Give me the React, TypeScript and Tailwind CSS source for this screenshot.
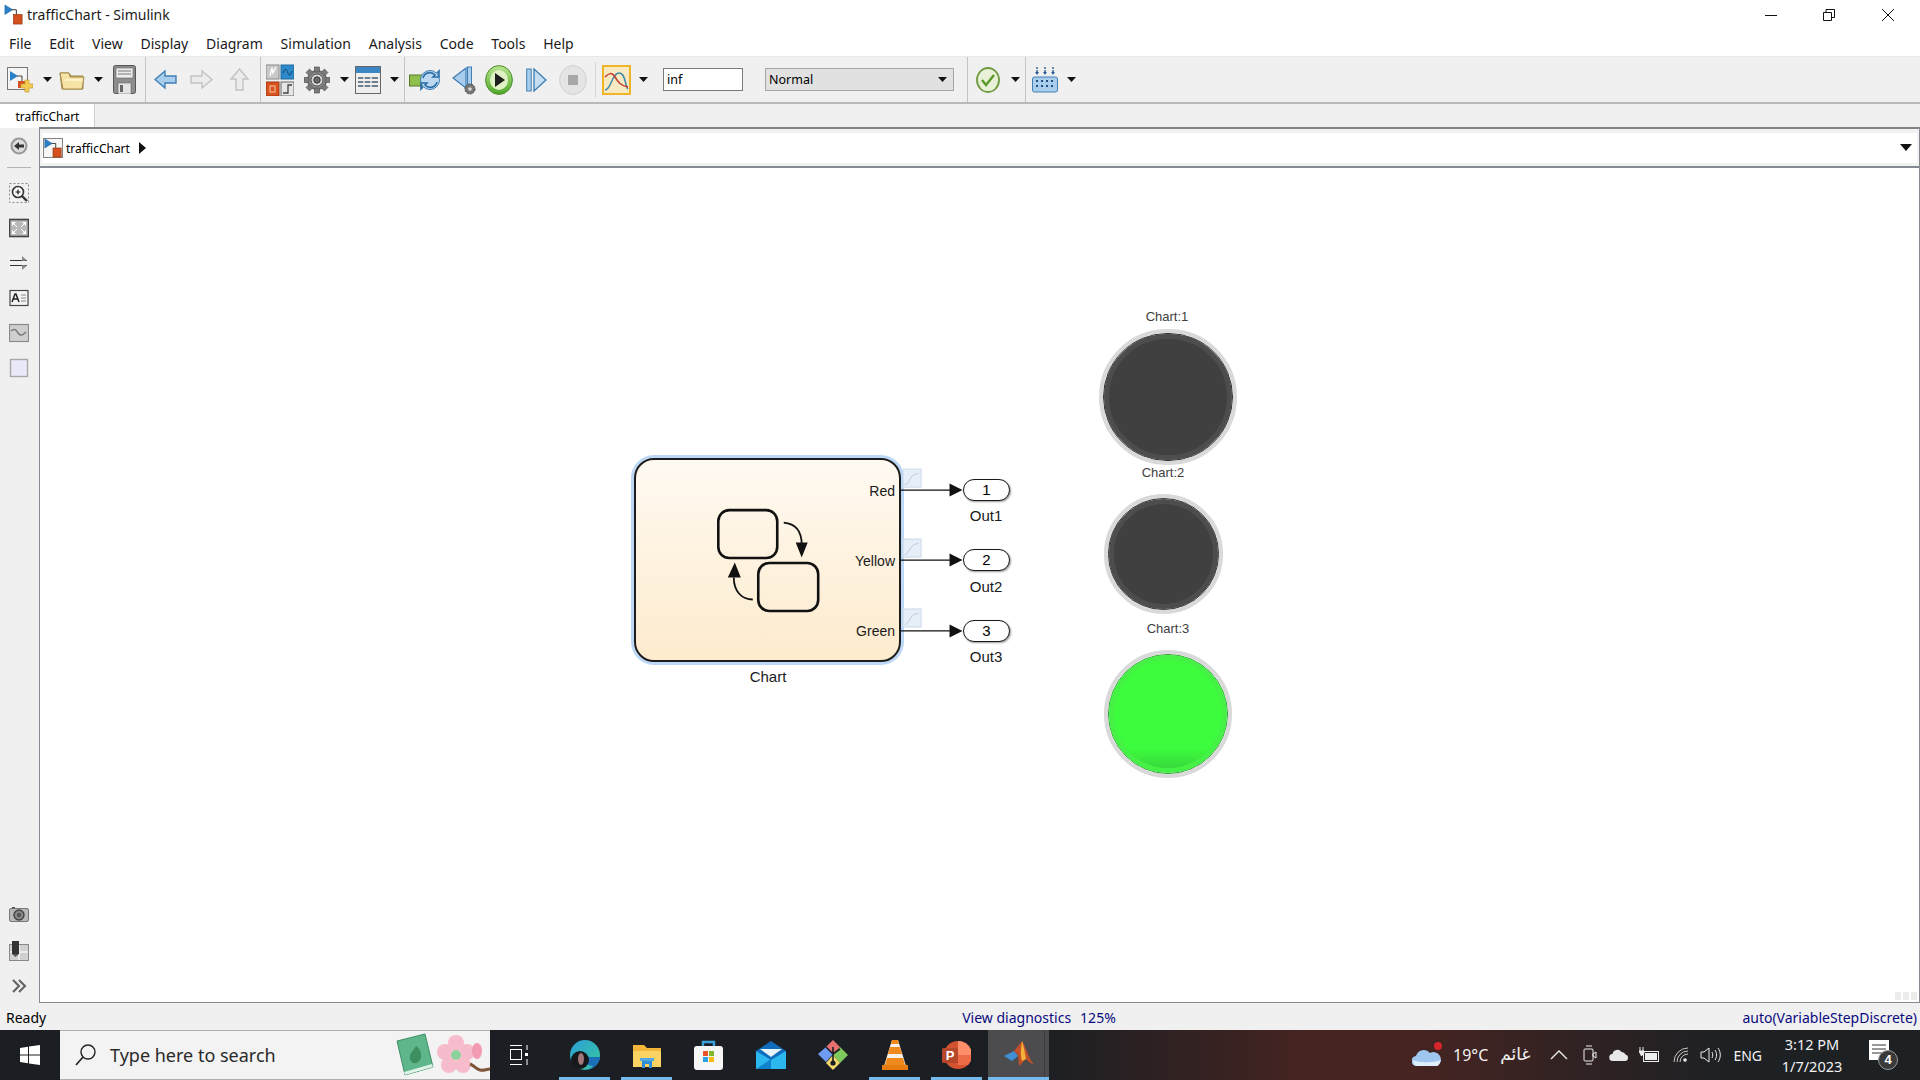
import type { ReactNode } from "react";

const ui = "font-['Noto_Sans','Open_Sans',sans-serif]";
const arial = "font-['Liberation_Sans',Arial,sans-serif]";

function Caret({ className = "" }: { className?: string }) {
  return (
    <svg width="9" height="5" viewBox="0 0 9 5" className={className}>
      <path d="M0 0h9L4.5 5z" fill="#111" />
    </svg>
  );
}

function ModelIcon({ size = 22, boxed = false }: { size?: number; boxed?: boolean }) {
  return (
    <svg width={size} height={size} viewBox="0 0 22 22">
      {boxed && <rect x="0.5" y="0.5" width="21" height="21" fill="#f6f6f6" stroke="#777" />}
      <path d="M9 6h5v7" fill="none" stroke="#333" />
      <path d="M2 1l8 5-8 5z" fill="#2a7fc9" stroke="#1b5f9b" strokeWidth=".6" />
      <rect x="11" y="11" width="9" height="10" fill="#d4501e" stroke="#8e3410" strokeWidth=".7" />
    </svg>
  );
}

function NewIcon() {
  return (
    <svg width="26" height="26" viewBox="0 0 26 26">
      <rect x="0.5" y="0.5" width="20" height="22" fill="#f4f4f4" stroke="#777" />
      <path d="M3 4l8 5-8 5z" fill="#2a7fc9" />
      <path d="M10 9h5v6" fill="none" stroke="#444" />
      <rect x="11" y="14" width="7" height="7" fill="#d4501e" />
      <path d="M18 13h4v4h4v4h-4v4h-4v-4h-4v-4h4z" fill="#f2cc54" stroke="#c89a2a" strokeWidth=".7" />
    </svg>
  );
}

function FolderIcon() {
  return (
    <svg width="26" height="20" viewBox="0 0 26 20">
      <path d="M1 3h9l2 3h12v13H3z" fill="#d7b767" stroke="#9a8448" />
      <path d="M1 3h9l1 4h14l-2 12H4z" fill="#f7e3a5" stroke="#a68d4f" />
      <path d="M6 9h17v2H6z" fill="#fff3c9" />
    </svg>
  );
}

function SaveIcon() {
  return (
    <svg width="23" height="29" viewBox="0 0 23 29">
      <rect x="0.5" y="0.5" width="22" height="28" rx="2" fill="#8d8d8d" stroke="#555" />
      <rect x="3" y="3" width="17" height="10" fill="#ececec" stroke="#666" strokeWidth=".6" />
      <path d="M5 6h13M5 9h13" stroke="#777" />
      <rect x="5" y="18" width="13" height="11" fill="#e4e4e4" stroke="#666" strokeWidth=".6" />
      <rect x="7" y="20" width="3" height="7" fill="#666" />
    </svg>
  );
}

function ArrowIcon({ dir, on }: { dir: "left" | "right" | "up"; on?: boolean }) {
  const rot = dir === "left" ? 0 : dir === "right" ? 180 : 90;
  return (
    <svg width="23" height="23" viewBox="0 0 23 23">
      <path
        transform={`rotate(${rot} 11.5 11.5)`}
        d="M1 11.5L11 3v5h11v7H11v5z"
        fill={on ? "#a9cdec" : "#ececec"}
        stroke={on ? "#3f7fb5" : "#c2c2c2"}
        strokeWidth="1.4"
      />
    </svg>
  );
}

function LibraryIcon() {
  return (
    <svg width="28" height="32" viewBox="0 0 28 32">
      <rect x="0" y="1" width="13" height="14" fill="#c9c9c9" stroke="#888" />
      <path d="M4 12l2-8 1 5 3-6" fill="none" stroke="#fff" strokeWidth="1.3" />
      <rect x="15" y="1" width="13" height="14" fill="#2e8bcb" stroke="#1f6a9e" />
      <path d="M17 9c2-5 3-5 5 0s3 0 4-2" fill="none" stroke="#123f66" />
      <rect x="0" y="18" width="13" height="14" fill="#d9521f" stroke="#9a3810" />
      <rect x="4" y="22" width="5" height="6" fill="none" stroke="#f5c9a8" />
      <rect x="15" y="18" width="13" height="14" fill="#e6e6e6" stroke="#666" />
      <path d="M17 29h5v-8h4" fill="none" stroke="#444" strokeWidth="1.3" />
    </svg>
  );
}

function GearIcon() {
  return (
    <svg width="26" height="30" viewBox="0 0 26 30">
      <g transform="translate(13 15)">
        <circle r="9.5" fill="#8c8c8c" stroke="#4c4c4c" />
        <g fill="#7a7a7a" stroke="#4c4c4c" strokeWidth=".6">
          <rect x="-2.5" y="-13" width="5" height="5" />
          <rect x="-2.5" y="8" width="5" height="5" />
          <rect x="-13" y="-2.5" width="5" height="5" />
          <rect x="8" y="-2.5" width="5" height="5" />
          <rect x="-2.5" y="-13" width="5" height="5" transform="rotate(45)" />
          <rect x="-2.5" y="8" width="5" height="5" transform="rotate(45)" />
          <rect x="-13" y="-2.5" width="5" height="5" transform="rotate(45)" />
          <rect x="8" y="-2.5" width="5" height="5" transform="rotate(45)" />
        </g>
        <circle r="6" fill="#d8d8d8" stroke="#555" />
        <circle r="3.2" fill="#6a6a6a" stroke="#333" />
      </g>
    </svg>
  );
}

function ExplorerIcon() {
  return (
    <svg width="26" height="28" viewBox="0 0 26 28">
      <rect x="0.5" y="0.5" width="25" height="27" fill="#efefef" stroke="#666" />
      <rect x="1" y="1" width="24" height="6" fill="#3d86c4" />
      <path d="M3 11h20v2H3zM3 15h20v2H3zM3 19h20v2H3z" fill="#6e7f8e" />
      <path d="M9 10v12M16 10v12" stroke="#efefef" strokeWidth="1.4" />
    </svg>
  );
}

function UpdateIcon() {
  return (
    <svg width="31" height="26" viewBox="0 0 31 26">
      <rect x="0.5" y="8" width="13" height="11" fill="#8fbf4c" stroke="#557a26" />
      <circle cx="21" cy="13" r="9.5" fill="#bcd9f1" stroke="#3f7fb5" />
      <path d="M14 11a7 7 0 0 1 12-3l-2 2h6V4l-2 2" fill="none" stroke="#2a6da6" strokeWidth="1.6" />
      <path d="M28 15a7 7 0 0 1-12 3l2-2h-6v6l2-2" fill="none" stroke="#2a6da6" strokeWidth="1.6" />
    </svg>
  );
}

function StepBackIcon() {
  return (
    <svg width="25" height="32" viewBox="0 0 25 32">
      <path d="M14 4v20L1 14z" fill="#a9cdec" stroke="#3f7fb5" strokeWidth="1.3" />
      <rect x="15.5" y="3" width="4" height="20" fill="#a9cdec" stroke="#3f7fb5" />
      <circle cx="18" cy="25" r="5" fill="#777" stroke="#444" strokeDasharray="2 1" />
      <circle cx="18" cy="25" r="1.8" fill="#ddd" />
    </svg>
  );
}

function RunIcon() {
  return (
    <svg width="28" height="30" viewBox="0 0 28 30">
      <defs>
        <linearGradient id="runG" x1="0" y1="0" x2="0" y2="1">
          <stop offset="0" stopColor="#b9e58f" />
          <stop offset="1" stopColor="#4ea82a" />
        </linearGradient>
      </defs>
      <ellipse cx="14" cy="15" rx="13.4" ry="14.4" fill="url(#runG)" stroke="#4d8c2b" />
      <ellipse cx="14" cy="15" rx="9" ry="10" fill="#dff2c6" />
      <path d="M10 8l10 7-10 7z" fill="#1f1f1f" />
    </svg>
  );
}

function StepFwdIcon() {
  return (
    <svg width="21" height="26" viewBox="0 0 21 26">
      <rect x="0.7" y="2" width="4.5" height="22" fill="#a9cdec" stroke="#3f7fb5" />
      <path d="M8 2v22l12-11z" fill="#c4ddf2" stroke="#3f7fb5" strokeWidth="1.3" />
    </svg>
  );
}

function StopIcon() {
  return (
    <svg width="28" height="30" viewBox="0 0 28 30">
      <ellipse cx="14" cy="15" rx="13.4" ry="14.4" fill="#e4e4e4" stroke="#d0d0d0" />
      <rect x="9" y="10" width="10" height="10" fill="#a8a8a8" />
    </svg>
  );
}

function ScopeIcon() {
  return (
    <svg width="29" height="30" viewBox="0 0 29 30">
      <rect x="1" y="1" width="27" height="28" fill="#f7e9c2" stroke="#f0b429" strokeWidth="2" />
      <path d="M3 25C9 25 10 8 17 8s6 14 9 16" fill="none" stroke="#3f8aa8" strokeWidth="1.5" />
      <path d="M3 12c4-4 7-5 10 0s6 9 13 10" fill="none" stroke="#c23b2b" strokeWidth="1.5" />
    </svg>
  );
}

function CheckIcon() {
  return (
    <svg width="24" height="26" viewBox="0 0 24 26">
      <ellipse cx="12" cy="13" rx="11" ry="12" fill="#e8f0d8" stroke="#6f9a40" strokeWidth="1.8" />
      <path d="M6 13l4 5 8-10" fill="none" stroke="#5a9a2a" strokeWidth="2.4" />
    </svg>
  );
}

function KeyboardIcon() {
  return (
    <svg width="26" height="27" viewBox="0 0 26 27">
      <path d="M5 1v6M13 1v6M21 1v6" stroke="#2a5f96" strokeWidth="1.4" strokeDasharray="2 1" />
      <path d="M3 6l2 3 2-3zM11 6l2 3 2-3zM19 6l2 3 2-3z" fill="#2a5f96" />
      <rect x="0.5" y="11" width="25" height="15" rx="2" fill="#a9cdec" stroke="#3f7fb5" />
      <path d="M4 15h2M9 15h2M14 15h2M19 15h2M4 20h2M9 20h2M14 20h2M19 20h2" stroke="#1f4f80" strokeWidth="2" />
    </svg>
  );
}

function Sep({ className = "" }: { className?: string }) {
  return <div className={`w-px self-stretch bg-[#c4c4c4] ${className}`} />;
}

function Lamp({
  outer,
  fill,
  ring,
  edge,
}: {
  outer: string;
  fill: string;
  ring: string;
  edge: string;
}) {
  return (
    <div className={`absolute rounded-full border-[4px] border-[#d9d9d9] ${outer}`}>
      <div className={`h-full w-full rounded-full border ${edge}`}>
        <div className={`h-full w-full rounded-full border-[5px] ${ring} ${fill}`} />
      </div>
    </div>
  );
}

function TaskIcon({ children, active }: { children: ReactNode; active?: boolean }) {
  return (
    <div className="relative flex h-full w-[51px] items-center justify-center">
      {children}
      {active && <div className="absolute bottom-0 left-0 right-0 h-[3px] bg-[#76b9ed]" />}
    </div>
  );
}

export default function App() {
  return (
    <div className={`flex h-[1080px] w-[1920px] flex-col overflow-hidden bg-[#f0f0f0] text-black ${ui}`}>
      {/* title bar */}
      <div className="flex h-[31px] items-center bg-white">
        <div className="ml-[3px] mt-[-3px]">
          <ModelIcon size={21} />
        </div>
        <span className="ml-[3px] mt-[-2px] text-[14px] text-[#1a1a1a]">trafficChart - Simulink</span>
        <div className="ml-auto flex h-full items-center">
          <svg width="12" height="12" viewBox="0 0 12 12" className="mb-[2px] mr-[46px]">
            <path d="M0 6.5h12" stroke="#111" />
          </svg>
          <svg width="12" height="12" viewBox="0 0 12 12" className="mb-[2px] mr-[47px]">
            <path d="M.5 3.5h8v8h-8zM3 3.5V.5h8.5v8h-3" fill="none" stroke="#111" />
          </svg>
          <svg width="12" height="12" viewBox="0 0 12 12" className="mb-[2px] mr-[26px]">
            <path d="M0 0l12 12M12 0L0 12" stroke="#111" />
          </svg>
        </div>
      </div>

      {/* menu */}
      <div className="flex h-[26px] items-center gap-[17.8px] border-b border-[#e8e8e8] bg-white pl-[9px] text-[14px] text-[#1a1a1a]">
        <span>File</span>
        <span>Edit</span>
        <span>View</span>
        <span>Display</span>
        <span>Diagram</span>
        <span>Simulation</span>
        <span>Analysis</span>
        <span>Code</span>
        <span>Tools</span>
        <span>Help</span>
      </div>

      {/* toolbar */}
      <div className="flex h-[47px] items-center border-b-2 border-[#b9b9b9] pr-px">
        <div className="ml-[7px]"><NewIcon /></div>
        <Caret className="ml-[10px]" />
        <div className="ml-[7px]"><FolderIcon /></div>
        <Caret className="ml-[9px]" />
        <div className="ml-[10px]"><SaveIcon /></div>
        <Sep className="ml-[9px]" />
        <div className="ml-[8px]"><ArrowIcon dir="left" on /></div>
        <div className="ml-[13px]"><ArrowIcon dir="right" /></div>
        <div className="ml-[15px]"><ArrowIcon dir="up" /></div>
        <Sep className="ml-[9px]" />
        <div className="ml-[5px]"><LibraryIcon /></div>
        <div className="ml-[10px]"><GearIcon /></div>
        <Caret className="ml-[10px]" />
        <div className="ml-[6px]"><ExplorerIcon /></div>
        <Caret className="ml-[9px]" />
        <Sep className="ml-[5px]" />
        <div className="ml-[4px]"><UpdateIcon /></div>
        <div className="ml-[12px]"><StepBackIcon /></div>
        <div className="ml-[8px]"><RunIcon /></div>
        <div className="ml-[13px]"><StepFwdIcon /></div>
        <div className="ml-[12px]"><StopIcon /></div>
        <div className="ml-[8px] h-[36px] w-px bg-[#d6d6d6]" />
        <div className="ml-[6px]"><ScopeIcon /></div>
        <Caret className="ml-[8px]" />
        <div className="ml-[15px] flex h-[23px] w-[80px] items-center border border-[#7a7a7a] bg-white pl-[3px] pt-[2px] text-[12.5px]">inf</div>
        <div className="ml-[22px] flex h-[23px] w-[189px] items-center justify-between border border-[#a6a6a6] bg-[#e1e1e1] pl-[3px] pr-[6px] pt-[2px] text-[12.5px]">
          <span>Normal</span>
          <Caret className="mb-[2px]" />
        </div>
        <Sep className="ml-[13px]" />
        <div className="ml-[8px]"><CheckIcon /></div>
        <Caret className="ml-[11px]" />
        <Sep className="ml-[5px]" />
        <div className="ml-[6px]"><KeyboardIcon /></div>
        <Caret className="ml-[9px]" />
      </div>

      {/* tabs */}
      <div className="flex h-[23px]">
        <div className="flex h-[24px] w-[95px] items-center justify-center border-r border-[#d0d0d0] bg-white pl-px pt-[2px] text-[12px]">trafficChart</div>
      </div>

      {/* body */}
      <div className="flex min-h-0 flex-1">
        <div className="flex w-[38px] flex-col items-center pb-[8px] pt-[10px]">
          <svg width="18" height="18" viewBox="0 0 18 18">
            <circle cx="9" cy="9" r="7.5" fill="#dcdcdc" stroke="#999" strokeWidth="2" />
            <path d="M4 9l5-4v2.5h5v3H9V13z" fill="#333" />
          </svg>
          <div className="mt-[12px] h-px w-[24px] bg-[#b5b5b5]" />
          <div className="mt-[15px] flex flex-col items-center gap-[15px]">
            <svg width="20" height="20" viewBox="0 0 20 20">
              <rect x=".5" y=".5" width="19" height="19" fill="none" stroke="#888" strokeDasharray="2 2" />
              <circle cx="9" cy="9" r="5.5" fill="#fff" stroke="#333" strokeWidth="1.6" />
              <path d="M13 13l5 5" stroke="#333" strokeWidth="2.4" />
              <path d="M6.5 9h5M9 6.5v5" stroke="#111" strokeWidth="1.2" />
            </svg>
            <svg width="20" height="20" viewBox="0 0 20 20">
              <rect x=".5" y="1.5" width="19" height="17" fill="#b9b9b9" stroke="#444" strokeWidth="1.6" />
              <path d="M3 4h4L3 8zM17 4h-4l4 4zM3 16h4l-4-4zM17 16h-4l4-4z" fill="#fff" />
              <path d="M5 6l3 3M15 6l-3 3M5 14l3-3M15 14l-3-3" stroke="#fff" strokeWidth="1" />
            </svg>
            <svg width="20" height="20" viewBox="0 0 20 20">
              <path d="M1 7.5h17M1 12.5h17" stroke="#333" />
              <path d="M13 3l5 4.5-5 .5zM13 17l5-4.5-5-.5z" fill="#888" />
            </svg>
            <svg width="20" height="20" viewBox="0 0 20 20">
              <rect x="1" y="2.5" width="18" height="15" fill="#f4f4f4" stroke="#444" strokeWidth="1.2" />
              <path d="M3 14l3-8h1l3 8M4.5 11h4" fill="none" stroke="#222" strokeWidth="1.5" />
              <path d="M12 7h5M12 10h5M12 13h5" stroke="#888" />
            </svg>
            <svg width="20" height="20" viewBox="0 0 20 20">
              <rect x=".5" y="1.5" width="19" height="17" fill="#cfcfcf" stroke="#8a8a8a" strokeWidth="1.2" />
              <path d="M2 8c4-3 5-1 7 2s4 3 8-1" fill="none" stroke="#777" strokeWidth="1.5" />
            </svg>
            <svg width="20" height="20" viewBox="0 0 20 20">
              <rect x="1.5" y="1.5" width="17" height="17" fill="#e9e9f9" stroke="#a8a8a8" strokeWidth="1.4" />
            </svg>
          </div>
          <div className="mt-auto flex flex-col items-center gap-[16px]">
            <svg width="20" height="20" viewBox="0 0 20 20">
              <rect x=".5" y="3.5" width="19" height="13" rx="1.5" fill="#b9b9b9" stroke="#777" />
              <path d="M3 3.5V2h3v1.500" fill="#555" />
              <circle cx="10" cy="10" r="5" fill="#888" stroke="#444" strokeWidth="1.4" />
              <circle cx="10" cy="10" r="2.2" fill="#555" />
            </svg>
            <svg width="20" height="20" viewBox="0 0 20 20">
              <rect x=".5" y="3.5" width="19" height="16" fill="#d0d0d0" stroke="#888" />
              <path d="M10 4v15M1 11h18" stroke="#f4f4f4" strokeWidth="1.4" />
              <rect x="3" y="0" width="7" height="13" fill="#333" />
              <path d="M3 13l3.500 3 3.500-3z" fill="#555" />
            </svg>
            <svg width="20" height="18" viewBox="0 0 20 18">
              <path d="M4 3l6 6-6 6M10 3l6 6-6 6" fill="none" stroke="#666" strokeWidth="2.2" />
            </svg>
          </div>
        </div>

        <div className="ml-px flex min-w-0 flex-1 flex-col">
          {/* breadcrumb */}
          <div className="flex h-[41px] items-center border-x border-b-2 border-t-2 border-b-[#868a93] border-l-[#868a93] border-r-[#868a93] border-t-[#7f8289] bg-[#f2f2f2] px-[2px]">
            <div className="flex h-[30px] flex-1 items-center bg-white pr-[5px]">
              <div className="ml-px"><ModelIcon size={20} boxed /></div>
              <span className="ml-[3px] pt-[2px] text-[12px]">trafficChart</span>
              <svg width="7" height="12" viewBox="0 0 7 12" className="ml-[9px]">
                <path d="M0 0l7 6-7 6z" fill="#111" />
              </svg>
              <svg width="12" height="7" viewBox="0 0 12 7" className="ml-auto">
                <path d="M0 0h12L6 7z" fill="#111" />
              </svg>
            </div>
          </div>

          {/* diagram canvas */}
          <div className="relative min-h-0 flex-1 border-b border-l border-r border-[#868a93] bg-white">
            <div className="absolute left-[594px] top-[290px] h-[204px] w-[267px] rounded-[20px] border-2 border-[#1c1c1c] bg-linear-to-b from-[#fffaf2] to-[#fdebcd] shadow-[0_0_0_3px_#bcd8f6]" />

            <svg className="absolute left-0 top-0 h-full w-full" viewBox="0 0 1880 835">
              <g transform="translate(-40 -168)">
                {/* stateflow glyph */}
                <rect x="718.500" y="510.500" width="59" height="48" rx="11" fill="none" stroke="#111" strokeWidth="2.600" />
                <rect x="758.500" y="563.500" width="60" height="48" rx="11" fill="none" stroke="#111" strokeWidth="2.600" />
                <path d="M784 523c11 1 18 8 18 22" fill="none" stroke="#111" strokeWidth="1.800" />
                <path d="M796 543h12l-6 15z" fill="#111" />
                <path d="M753 600c-11 0-19-8-19-22" fill="none" stroke="#111" strokeWidth="1.800" />
                <path d="M728 578h13l-6-15z" fill="#111" />

                {/* wires */}
                <path d="M901 490.500h50M901 560.500h50M901 631.500h50" stroke="#111" strokeWidth="1.200" />
                <path d="M950 484l13 6.500-13 6.500zM950 554l13 6.500-13 6.500zM950 625l13 6.500-13 6.500z" fill="#111" />

                {/* signal logging badges */}
                <rect x="903.500" y="469.500" width="18" height="18" fill="#e6eef7" stroke="#c9d9ea" />
                <path d="M905 485c6 0 4-11 14-11" fill="none" stroke="#b9cee2" />
                <rect x="903.500" y="539.500" width="18" height="18" fill="#e6eef7" stroke="#c9d9ea" />
                <path d="M905 555c6 0 4-11 14-11" fill="none" stroke="#b9cee2" />
                <rect x="903.500" y="609.500" width="18" height="18" fill="#e6eef7" stroke="#c9d9ea" />
                <path d="M905 625c6 0 4-11 14-11" fill="none" stroke="#b9cee2" />
              </g>
            </svg>

            <div className={`absolute left-[855px] top-[323px] -translate-x-full -translate-y-1/2 text-[14px] text-[#1a1a1a] ${arial}`}>Red</div>
            <div className={`absolute left-[855px] top-[393px] -translate-x-full -translate-y-1/2 text-[14px] text-[#1a1a1a] ${arial}`}>Yellow</div>
            <div className={`absolute left-[855px] top-[463px] -translate-x-full -translate-y-1/2 text-[14px] text-[#1a1a1a] ${arial}`}>Green</div>
            <div className={`absolute left-[728px] top-[509px] -translate-x-1/2 -translate-y-1/2 text-[15px] text-[#1a1a1a] ${arial}`}>Chart</div>

            <div className={`absolute left-[923px] top-[311px] flex h-[22px] w-[47px] items-center justify-center rounded-full border-[1.5px] border-[#1a1a1a] bg-white text-[15px] shadow-[1px_1px_2px_#999] ${arial}`}>1</div>
            <div className={`absolute left-[923px] top-[381px] flex h-[22px] w-[47px] items-center justify-center rounded-full border-[1.5px] border-[#1a1a1a] bg-white text-[15px] shadow-[1px_1px_2px_#999] ${arial}`}>2</div>
            <div className={`absolute left-[923px] top-[452px] flex h-[22px] w-[47px] items-center justify-center rounded-full border-[1.5px] border-[#1a1a1a] bg-white text-[15px] shadow-[1px_1px_2px_#999] ${arial}`}>3</div>
            <div className={`absolute left-[946px] top-[348px] -translate-x-1/2 -translate-y-1/2 text-[15px] text-[#1a1a1a] ${arial}`}>Out1</div>
            <div className={`absolute left-[946px] top-[419px] -translate-x-1/2 -translate-y-1/2 text-[15px] text-[#1a1a1a] ${arial}`}>Out2</div>
            <div className={`absolute left-[946px] top-[489px] -translate-x-1/2 -translate-y-1/2 text-[15px] text-[#1a1a1a] ${arial}`}>Out3</div>

            {/* dashboard lamps */}
            <div className={`absolute left-[1127px] top-[149px] -translate-x-1/2 -translate-y-1/2 text-[13px] text-[#404040] ${arial}`}>Chart:1</div>
            <div className={`absolute left-[1123px] top-[305px] -translate-x-1/2 -translate-y-1/2 text-[13px] text-[#404040] ${arial}`}>Chart:2</div>
            <div className={`absolute left-[1128px] top-[461px] -translate-x-1/2 -translate-y-1/2 text-[13px] text-[#404040] ${arial}`}>Chart:3</div>
            <Lamp outer="left-[1059px] top-[161px] h-[136px] w-[138px]" fill="bg-[#404040]" ring="border-[#4d4d4d]" edge="border-[#2e2e2e]" />
            <Lamp outer="left-[1064px] top-[326px] h-[120px] w-[119px]" fill="bg-[#404040]" ring="border-[#4d4d4d]" edge="border-[#2e2e2e]" />
            <Lamp outer="left-[1064px] top-[482px] h-[128px] w-[128px]" fill="bg-[linear-gradient(180deg,#3dfb3d_0%,#3dfb3d_82%,#38d93c_100%)]" ring="border-[#44f144]" edge="border-[#2f9c35]" />

            <div className="absolute bottom-[2px] right-[2px] grid grid-cols-3 gap-[2px]">
              <div className="h-[8px] w-[6px] bg-[#ececec]" />
              <div className="h-[8px] w-[6px] bg-[#ececec]" />
              <div className="h-[8px] w-[6px] bg-[#ececec]" />
            </div>
          </div>
        </div>
      </div>

      {/* status bar */}
      <div className="flex h-[27px] items-center pt-[1px] text-[14px]">
        <span className="ml-[6px]">Ready</span>
        <span className="ml-[916px] text-[#0a0a80]">View diagnostics</span>
        <span className="ml-[9px] text-[#0a0a80]">125%</span>
        <span className="ml-auto mr-[3px] text-[#0a0a80]">auto(VariableStepDiscrete)</span>
      </div>

      {/* taskbar */}
      <div className="flex h-[50px] items-center bg-[linear-gradient(90deg,#1b1f23_54%,#452421_68%,#452421_74%,#1d2124_90%)] text-white">
        <div className="flex h-full w-[60px] items-center justify-center">
          <svg width="20" height="20" viewBox="0 0 20 20">
            <path d="M0 3l8-1.200V9.500H0zM9 1.600L20 0v9.500H9zM0 10.500h8v7.700L0 17zM9 10.500h11V20L9 18.400z" fill="#fff" />
          </svg>
        </div>
        <div className="flex h-full w-[430px] items-center border-y border-[#b0b0b0] bg-[#f3f3f3] pl-[15px] text-[#2a2a2a]">
          <svg width="22" height="22" viewBox="0 0 22 22">
            <circle cx="13" cy="8" r="7" fill="none" stroke="#222" strokeWidth="1.400" />
            <path d="M8 13l-7 8" stroke="#222" strokeWidth="1.600" />
          </svg>
          <span className="ml-[13px] text-[18px]">Type here to search</span>
          <svg width="38" height="44" viewBox="0 0 38 44" className="ml-auto mr-[2px]">
            <path d="M1 8L29 1l8 33-28 8z" fill="#5fb68a" stroke="#3d8f69" />
            <path d="M9 42l28-8-1-3-28 8z" fill="#dff2e6" />
            <path d="M20 13c4 2 7 9 4 14s-9 4-10-1 3-8 6-13z" fill="#3e8f5f" />
          </svg>
          <svg width="54" height="44" viewBox="0 0 54 44">
            <g fill="#f7bccb">
              <circle cx="20" cy="10" r="8" />
              <circle cx="9" cy="19" r="8" />
              <circle cx="31" cy="19" r="8" />
              <circle cx="13" cy="32" r="8" />
              <circle cx="27" cy="32" r="8" />
            </g>
            <circle cx="20" cy="22" r="5" fill="#8ed29e" />
            <ellipse cx="41" cy="18" rx="5" ry="8" fill="#f29bb3" />
            <path d="M34 31c5 2 6 5 10 6s6-1 10-1" fill="none" stroke="#80563a" strokeWidth="3" />
          </svg>
        </div>

        <div className="ml-[20px] flex h-full w-[19px] items-center">
          <svg width="19" height="20" viewBox="0 0 19 20">
            <path d="M0 .5h12M0 19.500h12M17 0v5M17 14v6" stroke="#fff" />
            <rect x=".5" y="4.500" width="11" height="10" fill="none" stroke="#fff" />
            <rect x="15" y="8" width="3" height="3" fill="#fff" />
          </svg>
        </div>

        <div className="ml-[30px] flex h-full gap-[11px]">
          <TaskIcon active>
            <svg width="30" height="30" viewBox="0 0 30 30">
              <defs>
                <linearGradient id="edgeG" x1="0" y1="0" x2="1" y2="1">
                  <stop offset="0" stopColor="#2b9fd9" />
                  <stop offset="1" stopColor="#37c89a" />
                </linearGradient>
              </defs>
              <circle cx="15" cy="15" r="15" fill="url(#edgeG)" />
              <path d="M30 17H14c0 6 4 9 9 9-3 3-6 4-9 4 8 1 16-6 16-13z" fill="#1b6fb8" />
              <circle cx="10" cy="20" r="9" fill="#17181a" />
              <ellipse cx="11" cy="19" rx="3" ry="6" fill="#a3787a" />
            </svg>
          </TaskIcon>
          <TaskIcon active>
            <svg width="30" height="26" viewBox="0 0 30 26">
              <path d="M1 3h11l3 3h14v19H1z" fill="#f2b53a" />
              <path d="M1 9h28v16H1z" fill="#fad363" />
              <path d="M10 18h10v8h-3v-4h-4v4h-3z" fill="#2f8ed6" />
              <path d="M8 16h14v3H8z" fill="#52a8e6" />
            </svg>
            <div className="absolute bottom-0 right-[10px] h-[3px] w-px bg-[#1b1f23]" />
          </TaskIcon>
          <TaskIcon>
            <svg width="29" height="30" viewBox="0 0 29 30">
              <path d="M9 6V2h11v4" fill="none" stroke="#3aa5dd" strokeWidth="2.400" />
              <rect x="0" y="6" width="29" height="24" rx="3" fill="#f6f6f6" />
              <rect x="9" y="11" width="5" height="5" fill="#e8532b" />
              <rect x="15" y="11" width="5" height="5" fill="#7fba2a" />
              <rect x="9" y="17" width="5" height="5" fill="#2ba0e6" />
              <rect x="15" y="17" width="5" height="5" fill="#fbb80d" />
            </svg>
          </TaskIcon>
          <TaskIcon>
            <svg width="30" height="28" viewBox="0 0 30 28">
              <path d="M15 0l15 10v18H0V10z" fill="#0f6cbd" />
              <path d="M0 10l15 9 15-9v18H0z" fill="#2cb8ee" />
              <path d="M4 8h22l-11 8z" fill="#e8f4fb" />
              <path d="M0 28l15-10v10z" fill="#1183ce" />
            </svg>
          </TaskIcon>
          <TaskIcon>
            <svg width="30" height="30" viewBox="0 0 30 30">
              <path d="M15 0l7 7-7 7-7-7z" fill="#e76f6f" />
              <path d="M8 7l7 7-7 8-8-8z" fill="#6f9bf2" />
              <path d="M22 7l8 8-8 8-7-8z" fill="#7fc85c" />
              <path d="M15 15l7 8-7 7-7-7z" fill="#f3d96b" />
              <path d="M15 7v18M8 7l7 7 7-5" fill="none" stroke="#1b1f23" strokeWidth="1.600" />
              <circle cx="15" cy="23" r="2.600" fill="#1b1f23" />
            </svg>
          </TaskIcon>
          <TaskIcon active>
            <svg width="26" height="30" viewBox="0 0 26 30">
              <path d="M10 0h6l8 26H2z" fill="#f6f2ea" />
              <path d="M8 7h10l2 7H6zM5 18h16l2 7H3z" fill="#f08a1c" />
              <path d="M0 25h26v5H0z" fill="#e77c11" />
              <path d="M10 0h6l1 4H9z" fill="#f08a1c" />
            </svg>
          </TaskIcon>
          <TaskIcon active>
            <svg width="29" height="32" viewBox="0 0 29 32">
              <circle cx="16" cy="16" r="14" fill="#d35230" />
              <path d="M16 2a14 14 0 0 1 14 14H16z" fill="#ff8f6b" />
              <path d="M16 16h14a14 14 0 0 1-4 10H16z" fill="#ed6c47" />
              <rect x="0" y="9" width="16" height="15" rx="1.500" fill="#b7472a" />
              <text x="8" y="21" textAnchor="middle" fontSize="13" fontWeight="700" fill="#fff" fontFamily="Liberation Sans, sans-serif">P</text>
            </svg>
          </TaskIcon>
        </div>

        <div className="ml-[6px] h-full">
          <div className="relative flex h-full w-[61px] items-center justify-center bg-[#4c4c4f]">
            <svg width="30" height="30" viewBox="0 0 30 30">
              <path d="M0 16l10-5 4 5-6 5z" fill="#3f8fd2" />
              <path d="M10 11l8-10c3 4 6 16 12 24-4-2-7-5-8-6l-7 7-1-11z" fill="#c1502a" />
              <path d="M18 1c-1 8-2 12 0 20l4-2c-1-6-2-12-4-18z" fill="#f5b23a" />
            </svg>
            <div className="absolute bottom-0 right-[4px] top-0 w-px bg-[#3a3a3c]" />
            <div className="absolute bottom-0 left-0 right-0 h-[3px] bg-[#76b9ed]" />
          </div>
        </div>

        {/* tray */}
        <div className="ml-auto flex h-full items-center text-[15px] text-[#f2f2f2]">
          <svg width="30" height="26" viewBox="0 0 30 26">
            <path d="M5 24a5 5 0 0 1-1-10 8 8 0 0 1 14-3 7 7 0 0 1 7 13z" fill="#9fc6ee" />
            <path d="M1 18c5 3 22 3 28 0-1 4-3 6-4 6H5c-2 0-4-2-4-6z" fill="#dfeefb" />
            <circle cx="26" cy="4" r="4" fill="#d3252a" />
          </svg>
          <span className="ml-[11px] text-[16px]">19°C</span>
          <span className="ml-[12px] font-['DejaVu_Sans','Noto_Sans',sans-serif] text-[17px]" dir="rtl">غائم</span>
          <svg width="18" height="10" viewBox="0 0 18 10" className="ml-[20px]">
            <path d="M1 9l8-8 8 8" fill="none" stroke="#eee" strokeWidth="1.300" />
          </svg>
          <svg width="14" height="22" viewBox="0 0 14 22" className="ml-[15px]">
            <rect x="1" y="5" width="9" height="12" rx="1" fill="none" stroke="#eee" />
            <path d="M10 10l3-2v6l-3-2zM3 2h6M3 20h6" fill="none" stroke="#eee" />
          </svg>
          <svg width="20" height="14" viewBox="0 0 20 14" className="ml-[12px]">
            <path d="M4 13a3.500 3.500 0 0 1-.5-7 5 5 0 0 1 9-2 4 4 0 0 1 4 2.500A3.300 3.300 0 0 1 16 13z" fill="#e8e8e8" />
          </svg>
          <svg width="20" height="16" viewBox="0 0 20 16" className="ml-[10px]">
            <rect x="4.500" y="4.500" width="15" height="10" fill="none" stroke="#eee" />
            <rect x="6" y="6" width="12" height="7" fill="#eee" />
            <path d="M1 0v4M4 0v4M0 4h5v2L2.500 9z" stroke="#eee" fill="#eee" />
          </svg>
          <svg width="16" height="16" viewBox="0 0 16 16" className="ml-[14px]">
            <path d="M1 15A14 14 0 0 1 15 1M4 15A11 11 0 0 1 15 4M7 15a8 8 0 0 1 8-8" fill="none" stroke="#ddd" strokeWidth=".9" />
            <circle cx="12" cy="13" r="1.800" fill="#eee" />
          </svg>
          <svg width="21" height="18" viewBox="0 0 21 18" className="ml-[11px]">
            <path d="M1 6h3l5-4v14l-5-4H1z" fill="none" stroke="#eee" />
            <path d="M12 6c1 2 1 4 0 6M15 4c2 3 2 7 0 10M18 2c3 4 3 10 0 14" fill="none" stroke="#eee" />
          </svg>
          <span className="ml-[12px] text-[14px]">ENG</span>
          <div className="ml-[20px] flex w-[60px] flex-col items-center text-[14.5px] leading-[22px]">
            <span className="whitespace-nowrap">3:12 PM</span>
            <span className="whitespace-nowrap">1/7/2023</span>
          </div>
          <div className="relative ml-[27px] mr-[22px] h-[30px] w-[29px]">
            <svg width="20" height="22" viewBox="0 0 20 22">
              <path d="M0 0h20v20H0z" fill="#fff" />
              <path d="M3 5h14M3 9h14M3 13h14" stroke="#333" />
            </svg>
            <div className={`absolute bottom-0 right-0 flex h-[20px] w-[20px] items-center justify-center rounded-full border border-[#999] bg-[#3a3a3a] text-[13px] font-bold text-white ${arial}`}>4</div>
          </div>
        </div>
      </div>
    </div>
  );
}
